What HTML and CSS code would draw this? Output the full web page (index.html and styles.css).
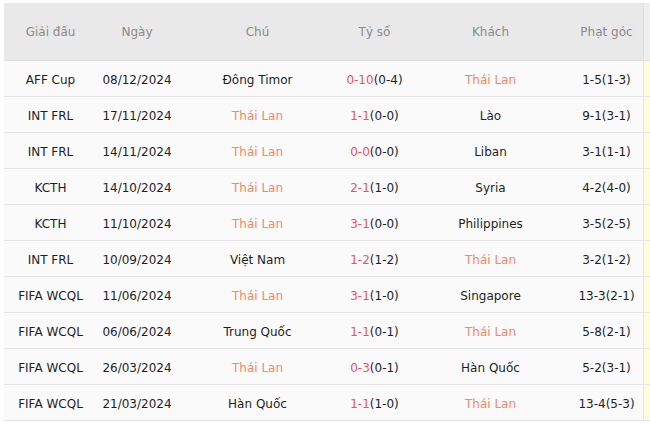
FILE: index.html
```html
<!DOCTYPE html>
<html lang="vi">
<head>
<meta charset="utf-8">
<link rel="stylesheet" href="styles.css">
</head>
<body>
<div class="wrap">
  <div class="table">
    <div class="row head">
      <div class="c">Giải đấu</div><div class="c">Ngày</div><div class="c">Chú</div><div class="c">Tỷ số</div><div class="c">Khách</div><div class="c">Phạt góc</div><div class="c extra"></div>
    </div>
    <div class="row">
      <div class="c">AFF Cup</div><div class="c">08/12/2024</div><div class="c">Đông Timor</div><div class="c"><span class="red">0-10</span>(0-4)</div><div class="c hl">Thái Lan</div><div class="c">1-5(1-3)</div><div class="c extra"></div>
    </div>
    <div class="row">
      <div class="c">INT FRL</div><div class="c">17/11/2024</div><div class="c hl">Thái Lan</div><div class="c"><span class="red">1-1</span>(0-0)</div><div class="c">Lào</div><div class="c">9-1(3-1)</div><div class="c extra"></div>
    </div>
    <div class="row">
      <div class="c">INT FRL</div><div class="c">14/11/2024</div><div class="c hl">Thái Lan</div><div class="c"><span class="red">0-0</span>(0-0)</div><div class="c">Liban</div><div class="c">3-1(1-1)</div><div class="c extra"></div>
    </div>
    <div class="row">
      <div class="c">KCTH</div><div class="c">14/10/2024</div><div class="c hl">Thái Lan</div><div class="c"><span class="red">2-1</span>(1-0)</div><div class="c">Syria</div><div class="c">4-2(4-0)</div><div class="c extra"></div>
    </div>
    <div class="row">
      <div class="c">KCTH</div><div class="c">11/10/2024</div><div class="c hl">Thái Lan</div><div class="c"><span class="red">3-1</span>(0-0)</div><div class="c">Philippines</div><div class="c">3-5(2-5)</div><div class="c extra"></div>
    </div>
    <div class="row">
      <div class="c">INT FRL</div><div class="c">10/09/2024</div><div class="c">Việt Nam</div><div class="c"><span class="red">1-2</span>(1-2)</div><div class="c hl">Thái Lan</div><div class="c">3-2(1-2)</div><div class="c extra"></div>
    </div>
    <div class="row">
      <div class="c">FIFA WCQL</div><div class="c">11/06/2024</div><div class="c hl">Thái Lan</div><div class="c"><span class="red">3-1</span>(1-0)</div><div class="c">Singapore</div><div class="c">13-3(2-1)</div><div class="c extra"></div>
    </div>
    <div class="row">
      <div class="c">FIFA WCQL</div><div class="c">06/06/2024</div><div class="c">Trung Quốc</div><div class="c"><span class="red">1-1</span>(0-1)</div><div class="c hl">Thái Lan</div><div class="c">5-8(2-1)</div><div class="c extra"></div>
    </div>
    <div class="row">
      <div class="c">FIFA WCQL</div><div class="c">26/03/2024</div><div class="c hl">Thái Lan</div><div class="c"><span class="red">0-3</span>(0-1)</div><div class="c">Hàn Quốc</div><div class="c">5-2(3-1)</div><div class="c extra"></div>
    </div>
    <div class="row">
      <div class="c">FIFA WCQL</div><div class="c">21/03/2024</div><div class="c">Hàn Quốc</div><div class="c"><span class="red">1-1</span>(1-0)</div><div class="c hl">Thái Lan</div><div class="c">13-4(5-3)</div><div class="c extra"></div>
    </div>
  </div>
</div>
</body>
</html>
```
FILE: styles.css
```css
html, body {
  margin: 0;
  padding: 0;
  background: #ffffff;
}
body {
  font-family: "DejaVu Sans", Verdana, sans-serif;
  font-size: 12px;
  color: #1e1e1e;
  overflow: hidden;
}
.wrap {
  padding: 3px 0 0 4px;
  width: 646px;
  overflow: hidden;
}
.table {
  width: 700px;
}
.row {
  display: grid;
  grid-template-columns: 93px 80px 161px 73px 159px 73px 61px;
  height: 35px;
  border-bottom: 1px solid #e4e4e4;
  background: #fafafa;
}
.row.head {
  height: 57px;
  background: #e9e9e9;
  color: #8a8a8a;
  border-bottom: 1px solid #e0e0e0;
}
.c {
  display: flex;
  align-items: center;
  justify-content: center;
  white-space: nowrap;
  padding-top: 2px;
}
.head .c {
  padding-top: 0;
}
.c.extra {
  background: #fffcdc;
  border-left: 1px solid #e6e6e6;
}
.head .c.extra {
  background: #efefef;
  border-left: 1px solid #dedede;
}
.hl {
  color: #ef8a67;
}
.red {
  color: #e5575a;
}
```
